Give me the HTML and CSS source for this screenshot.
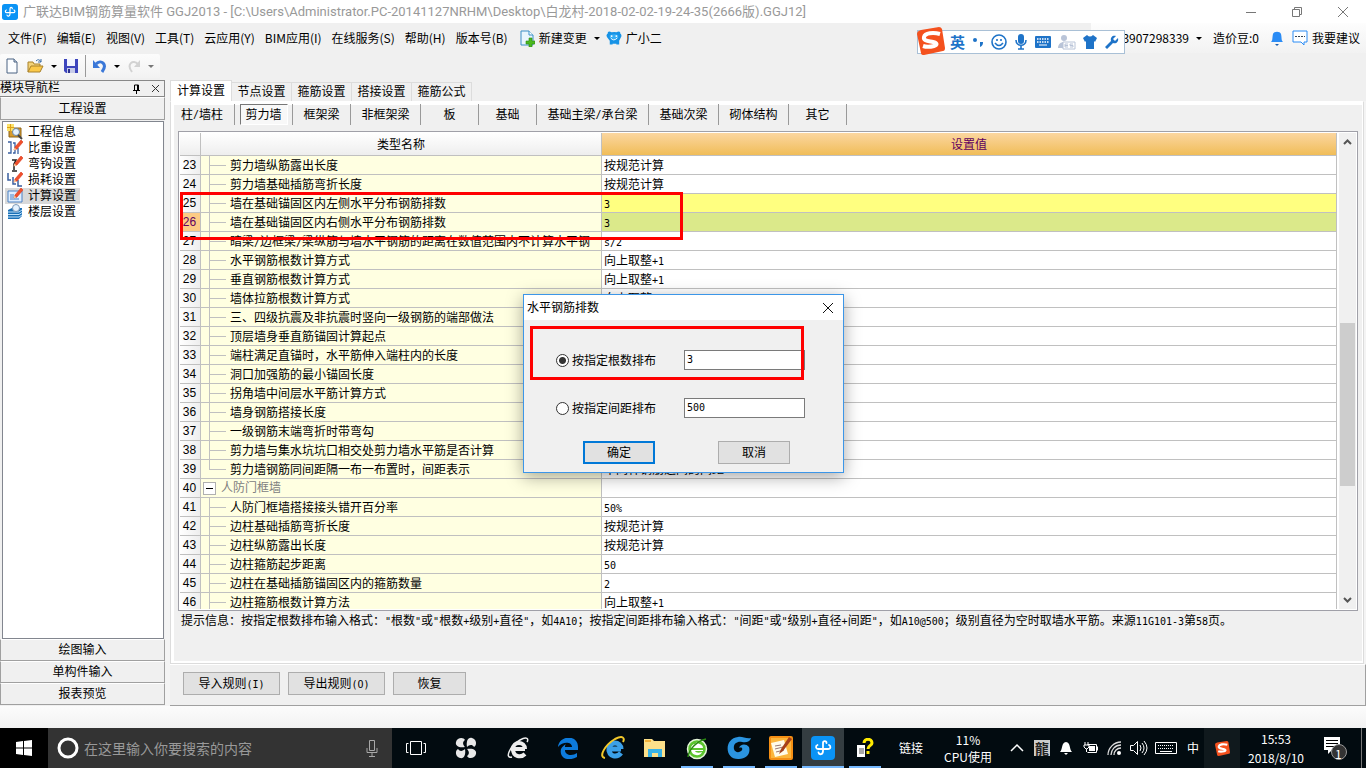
FILE: index.html
```html
<!DOCTYPE html>
<html lang="zh-CN">
<head>
<meta charset="utf-8">
<title>广联达BIM钢筋算量软件 GGJ2013</title>
<link rel="stylesheet" href="styles.css">
</head>
<body>
<svg class="defs" width="0" height="0" aria-hidden="true">
  <defs>
    <symbol id="glodon" viewBox="0 0 24 24"><rect width="24" height="24" rx="4" fill="#0a93f5"/><path d="M12 7v8c0 4-4 4-4.500 1.500M12 7c0-2.500 3.500-2.500 3.500 0M6.500 9C4 10 5 13 7 13h10c3 0 3-3 1-4" fill="none" stroke="#fff" stroke-width="1.800" stroke-linecap="round"/></symbol>
    <symbol id="sogou" viewBox="0 0 28 28"><path d="M4 3 22 0q2 0 3 2l3 19q0 3-2 3L7 28q-3 0-3-2L0 7q0-3 4-4z" fill="#f4511e"/><path d="M23 7C16 5 8 6 7 10s5 4 9 5 5 3 1 4-8 1-11 0" fill="none" stroke="#fff" stroke-width="4"/></symbol>
    <symbol id="pencil" viewBox="0 0 16 16"><path d="M8 7 14 0l2 2-6 7-3 1z" fill="#f0502c" stroke="#d8361a" stroke-width=".6"/><path d="m6.500 10.500 1-3 2 2z" fill="#f6c99a"/></symbol>
  </defs>
</svg>

<header class="titlebar">
  <svg class="app-icon" viewBox="0 0 24 24"><use href="#glodon"/></svg>
  <h1>广联达BIM钢筋算量软件 GGJ2013 - [C:\Users\Administrator.PC-20141127NRHM\Desktop\白龙村-2018-02-02-19-24-35(2666版).GGJ12]</h1>
  <div class="window-buttons">
    <button aria-label="最小化"><svg width="12" height="12" viewBox="0 0 12 12"><path d="M1 6.500h10"/></svg></button>
    <button aria-label="还原"><svg width="12" height="12" viewBox="0 0 12 12"><path d="M1.500 3.500h7v7h-7zM3.500 3.500v-2h7v7h-2"/></svg></button>
    <button aria-label="关闭"><svg width="12" height="12" viewBox="0 0 12 12"><path d="m1 1 10 10M11 1 1 11"/></svg></button>
  </div>
</header>

<nav class="menubar">
  <button>文件(F)</button><button>编辑(E)</button><button>视图(V)</button><button>工具(T)</button><button>云应用(Y)</button><button>BIM应用(I)</button><button>在线服务(S)</button><button>帮助(H)</button><button>版本号(B)</button>
  <button class="with-icon change"><svg width="15" height="17" viewBox="0 0 15 17"><path d="M1 1h8l4 4v10H1z" fill="#e8f5fd" stroke="#3a8fc7"/><path d="M9 1v4h4" fill="#fff" stroke="#3a8fc7"/><path d="M9 8h3v3h3v3h-3v3H9v-3H6v-3h3z" fill="#4cb81e" stroke="#2c8a10" stroke-width=".6"/></svg>新建变更<i class="caret"></i></button>
  <button class="with-icon bear"><svg width="16" height="16" viewBox="0 0 17 16"><path d="M2 2q1-2 4 0 3-1 5 0 3-2 4 0 0 2 1 2 1 2 0 3l-2 4v4h-3v-1H7v1H4v-4L1 7Q0 5 1 4q1 0 1-2z" fill="#1793e6"/><path d="M4 5q5-2 9 0v3q-4 3-9 0z" fill="#37aef5"/><circle cx="6" cy="6" r="1" fill="#fff"/><circle cx="11" cy="6" r="1" fill="#fff"/><path d="M5 8q3 4 7 0" fill="none" stroke="#fff"/></svg>广小二</button>
  <div class="account">
    <button>3907298339<i class="caret"></i></button>
    <span>造价豆:0</span>
    <svg width="14" height="16" viewBox="0 0 14 16"><path d="M1 12c2-2 1-4 2-8 1-3 7-3 8 0 1 4 0 6 2 8z" fill="#2b8cf5"/><path d="M5 14h4l-2 2z" fill="#1a5fb0"/></svg>
    <button class="suggest"><svg width="16" height="16" viewBox="0 0 16 16"><path d="M1 1h14v11h-3v3l-3-3H1z" fill="#fff" stroke="#2b8cf5"/><path d="M3 6.500h10" stroke="#345" stroke-dasharray="2 1"/></svg>我要建议</button>
  </div>
  <div class="ime">
    <svg class="ime-logo" width="28" height="28" viewBox="0 0 28 28"><use href="#sogou"/></svg>
    <b>英</b>
    <svg width="12" height="16" viewBox="0 0 12 16"><circle cx="3" cy="6" r="2" fill="#1e73c8"/><path d="M8 8h3c0 3-1 4-3 5" fill="#1e73c8"/></svg>
    <svg width="16" height="16" viewBox="0 0 16 16"><g fill="none" stroke="#1e73c8" stroke-width="1.600"><circle cx="8" cy="8" r="7"/><path d="M4 9q4 5 8 0M6 5v2M10 5v2"/></g></svg>
    <svg width="14" height="16" viewBox="0 0 14 16"><rect x="4" width="6" height="10" rx="3" fill="#1e73c8"/><path d="M2 6c0 7 10 7 10 0M7 11v4M4 15h6" fill="none" stroke="#1e73c8" stroke-width="1.600"/></svg>
    <svg width="16" height="12" viewBox="0 0 16 12"><rect width="16" height="12" rx="1" fill="#1e73c8"/><path d="M2 3h12M2 6h12" stroke="#fff" stroke-width="1.500" stroke-dasharray="1.500 1"/><path d="M4 9h8" stroke="#fff"/></svg>
    <svg width="18" height="16" viewBox="0 0 18 16"><circle cx="6" cy="4" r="3" fill="#b9c4d8"/><path d="M0 14c0-8 12-8 12 0z" fill="#b9c4d8"/><path d="M5 8h12v7H5z" fill="#fff" stroke="#b9c4d8"/><path d="M10 10H7v3h3M7 11.500h3M15 10h-3v1.500h3V13h-3" fill="none" stroke="#b9c4d8"/></svg>
    <svg width="14" height="14" viewBox="0 0 14 14"><path d="M0 3 4 0q3 3 6 0l4 3-2 4-1-1v8H3V6L2 7z" fill="#1e73c8"/></svg>
    <svg width="15" height="15" viewBox="0 0 15 15"><path d="m1 12 6-6c-1-4 2-6 5-5L9 4l2 2 3-3c1 4-2 6-5 5l-6 6z" fill="#1e73c8"/></svg>
  </div>
</nav>

<div class="toolbar">
  <div class="tools">
    <button aria-label="新建"><svg width="16" height="16" viewBox="0 0 16 16"><path d="M3 1h7l3 3v11H3z" fill="#fbfdff" stroke="#4b6382"/><path d="M10 1v3h3" fill="#c8d6e6" stroke="#4b6382"/></svg></button>
    <button aria-label="打开" class="wide"><svg width="17" height="16" viewBox="0 0 17 16"><path d="M1 14V4h5l1 2h6v3" fill="#f3d37a" stroke="#a8812a"/><path d="m1 14 3-6h12l-3 6z" fill="#fbc94a" stroke="#a8812a"/><path d="M9 3q3-3 5 1M14 1v3h-3" fill="none" stroke="#3d6fa6"/></svg><i class="caret"></i></button>
    <button aria-label="保存"><svg width="14" height="14" viewBox="0 0 14 14"><path d="M0 0h14v14H2l-2-2z" fill="#3d45bd"/><path d="M3 0h8v7H3z" fill="#f2f4ff"/><path d="M3 9h8v5H3z" fill="#c7cbe8"/><path d="M4 10h2v4H4z" fill="#2c3290"/></svg></button>
    <span class="tool-sep"></span>
    <button aria-label="撤销" class="wide"><svg width="14" height="14" viewBox="0 0 14 14"><path d="M3 5c5-5 12 0 6 8" fill="none" stroke="#3b78d8" stroke-width="3"/><path d="M0 1v8h7z" fill="#3b78d8"/></svg><i class="caret"></i></button>
    <button aria-label="恢复" class="wide"><svg width="14" height="14" viewBox="0 0 14 14"><path d="M11 5C6 0-1 5 5 13" fill="none" stroke="#d2d2d2" stroke-width="2"/><path d="M13 1v7H7z" fill="#d2d2d2"/></svg><i class="caret dim"></i></button>
  </div>
</div>

<div class="workspace">
  <aside class="sidebar">
    <div class="side-title"><span>模块导航栏</span>
      <svg width="9" height="10" viewBox="0 0 9 10"><path d="M2.500 6V1h4v5M5.500 1v5M1 6.500h7M4.500 6v4" fill="none" stroke="#000"/></svg>
      <svg width="9" height="9" viewBox="0 0 9 9"><path d="m1 1 7 7M8 1 1 8" stroke="#333"/></svg>
    </div>
    <button class="side-button">工程设置</button>
    <ul class="side-list">
      <li><svg width="16" height="16" viewBox="0 0 16 16"><path d="M2 4h12v9H2z" fill="#d79b2d" stroke="#8d651b"/><path d="M0 0h7v7H0z" fill="#fbe26a"/><path d="M0 3.500h7M3.500 0v7" stroke="#e0a018"/><circle cx="9" cy="8" r="3.500" fill="#e6f3ff" stroke="#6a86a8"/><path d="m11 11 4 4" stroke="#444" stroke-width="2"/></svg><span>工程信息</span></li>
      <li><svg width="16" height="16" viewBox="0 0 16 16"><path d="M1 2h3v11H1M6 3h2v10H6M11 8v6" fill="none" stroke="#3a5fa0" stroke-width="1.300"/><use href="#pencil"/></svg><span>比重设置</span></li>
      <li><svg width="16" height="16" viewBox="0 0 16 16"><path d="M5 4h4L7 8v6M5 15h5" fill="none" stroke="#222" stroke-width="1.500"/><use href="#pencil"/></svg><span>弯钩设置</span></li>
      <li><svg width="16" height="16" viewBox="0 0 16 16"><path d="M1 1v7h3M6 5v7h3M11 8v6h4" fill="none" stroke="#3a5fa0" stroke-width="1.500"/><use href="#pencil"/></svg><span>损耗设置</span></li>
      <li class="selected"><svg width="16" height="16" viewBox="0 0 16 16"><path d="M1 3h14v11H1z" fill="#dfeeff" stroke="#4d82c4"/><path d="M3 7h4M3 9h7M3 11h9" stroke="#4d82c4"/><use href="#pencil"/></svg><span>计算设置</span></li>
      <li><svg width="16" height="16" viewBox="0 0 16 16"><path d="m1 6 4-2h10v8l-3 3H1z" fill="#1a6fb5"/><path d="M1 8h11l3-2M1 10.500h11l3-2M1 13h11l3-2" fill="none" stroke="#bfe2fb"/><circle cx="9" cy="4" r="3.500" fill="#e4f2ff" stroke="#7d98b8"/></svg><span>楼层设置</span></li>
    </ul>
    <button class="side-button">绘图输入</button>
    <button class="side-button">单构件输入</button>
    <button class="side-button">报表预览</button>
  </aside>

  <main class="content">
    <div class="tabs" role="tablist">
      <button role="tab" aria-selected="true" class="active">计算设置</button><button role="tab">节点设置</button><button role="tab">箍筋设置</button><button role="tab">搭接设置</button><button role="tab">箍筋公式</button>
    </div>
    <section class="page">
      <div class="kinds">
        <button class="w3">柱<span class="n">/</span>墙柱</button><button class="w3 pressed"><span>剪力墙</span></button><button class="w3">框架梁</button><button class="w4">非框架梁</button><button class="w3">板</button><button class="w3">基础</button><button class="w7">基础主梁<span class="n">/</span>承台梁</button><button class="w4">基础次梁</button><button class="w4">砌体结构</button><button class="w3">其它</button>
      </div>
      <div class="grid">
        <div class="grid-view">
          <table>
            <colgroup><col class="c-no"><col class="c-name"><col></colgroup>
            <thead><tr><th></th><th>类型名称</th><th class="current">设置值</th></tr></thead>
            <tbody>
              <tr><th>23</th><td class="leaf">剪力墙纵筋露出长度</td><td>按规范计算</td></tr>
              <tr><th>24</th><td class="leaf">剪力墙基础插筋弯折长度</td><td>按规范计算</td></tr>
              <tr class="changed"><th>25</th><td class="leaf">墙在基础锚固区内左侧水平分布钢筋排数</td><td><span class="n">3</span></td></tr>
              <tr class="editing"><th>26</th><td class="leaf">墙在基础锚固区内右侧水平分布钢筋排数</td><td><span class="n">3</span></td></tr>
              <tr><th>27</th><td class="leaf">暗梁<span class="n">/</span>边框梁<span class="n">/</span>梁纵筋与墙水平钢筋的距离在数值范围内不计算水平钢</td><td><span class="n">s/2</span></td></tr>
              <tr><th>28</th><td class="leaf">水平钢筋根数计算方式</td><td>向上取整<span class="n">+1</span></td></tr>
              <tr><th>29</th><td class="leaf">垂直钢筋根数计算方式</td><td>向上取整<span class="n">+1</span></td></tr>
              <tr><th>30</th><td class="leaf">墙体拉筋根数计算方式</td><td>向上取整</td></tr>
              <tr><th>31</th><td class="leaf">三、四级抗震及非抗震时竖向一级钢筋的端部做法</td><td></td></tr>
              <tr><th>32</th><td class="leaf">顶层墙身垂直筋锚固计算起点</td><td></td></tr>
              <tr><th>33</th><td class="leaf">端柱满足直锚时，水平筋伸入端柱内的长度</td><td></td></tr>
              <tr><th>34</th><td class="leaf">洞口加强筋的最小锚固长度</td><td></td></tr>
              <tr><th>35</th><td class="leaf">拐角墙中间层水平筋计算方式</td><td></td></tr>
              <tr><th>36</th><td class="leaf">墙身钢筋搭接长度</td><td></td></tr>
              <tr><th>37</th><td class="leaf">一级钢筋末端弯折时带弯勾</td><td></td></tr>
              <tr><th>38</th><td class="leaf">剪力墙与集水坑坑口相交处剪力墙水平筋是否计算</td><td></td></tr>
              <tr><th>39</th><td class="leaf last">剪力墙钢筋同间距隔一布一布置时，间距表示</td><td>不同种钢筋之间的间距</td></tr>
              <tr><th>40</th><td class="group"><button aria-label="折叠"></button>人防门框墙</td><td></td></tr>
              <tr><th>41</th><td class="leaf">人防门框墙搭接接头错开百分率</td><td><span class="n">50%</span></td></tr>
              <tr><th>42</th><td class="leaf">边柱基础插筋弯折长度</td><td>按规范计算</td></tr>
              <tr><th>43</th><td class="leaf">边柱纵筋露出长度</td><td>按规范计算</td></tr>
              <tr><th>44</th><td class="leaf">边柱箍筋起步距离</td><td><span class="n">50</span></td></tr>
              <tr><th>45</th><td class="leaf">边柱在基础插筋锚固区内的箍筋数量</td><td><span class="n">2</span></td></tr>
              <tr><th>46</th><td class="leaf">边柱箍筋根数计算方法</td><td>向上取整<span class="n">+1</span></td></tr>
            </tbody>
          </table>
        </div>
        <div class="scrollbar">
          <svg width="9" height="6" viewBox="0 0 9 6"><path d="m1 5 3.500-3.500L8 5"/></svg>
          <i class="track-top"></i><i class="thumb"></i><i class="track-bottom"></i>
          <svg width="9" height="6" viewBox="0 0 9 6"><path d="m1 1 3.500 3.500L8 1"/></svg>
        </div>
        <div class="mark mark-rows"></div>
      </div>
      <p class="hint">提示信息：按指定根数排布输入格式：<span class="n">"</span>根数<span class="n">"</span>或<span class="n">"</span>根数<span class="n">+</span>级别<span class="n">+</span>直径<span class="n">"</span>，如<span class="n">4A10</span>；按指定间距排布输入格式：<span class="n">"</span>间距<span class="n">"</span>或<span class="n">"</span>级别<span class="n">+</span>直径<span class="n">+</span>间距<span class="n">"</span>，如<span class="n">A10@500</span>；级别直径为空时取墙水平筋。来源<span class="n">11G101-3</span>第<span class="n">58</span>页。</p>
    </section>
    <footer class="actions">
      <button>导入规则<span class="n">(I)</span></button><button>导出规则<span class="n">(O)</span></button><button class="short">恢复</button>
    </footer>
  </main>
</div>
<div class="status"></div>

<form class="dialog" role="dialog" aria-label="水平钢筋排数">
  <div class="dialog-title"><span>水平钢筋排数</span><button type="button" aria-label="关闭"><svg width="12" height="12" viewBox="0 0 12 12"><path d="m1 1 10 10M11 1 1 11" stroke="#111"/></svg></button></div>
  <div class="dialog-body">
    <div class="option"><label><input type="radio" name="mode" checked><span>按指定根数排布</span></label><input type="text" aria-label="根数" value="3"></div>
    <div class="option"><label><input type="radio" name="mode"><span>按指定间距排布</span></label><input type="text" aria-label="间距" value="500"></div>
    <div class="dialog-buttons"><button type="button" class="default">确定</button><button type="button">取消</button></div>
  </div>
  <div class="mark mark-option"></div>
</form>

<footer class="taskbar">
  <button class="start" aria-label="开始"><svg width="16" height="16" viewBox="0 0 16 16"><path d="m0 2 7-1v6.500H0zM8 1l8-1v7.500H8zM0 8.500h7V15l-7-1zM8 8.500h8V16l-8-1z" fill="#fff"/></svg></button>
  <label class="search">
    <svg width="22" height="22" viewBox="0 0 22 22"><circle cx="11" cy="11" r="9" fill="none" stroke="#fff" stroke-width="3"/></svg>
    <input type="text" placeholder="在这里输入你要搜索的内容">
    <svg width="12" height="17" viewBox="0 0 12 17"><path d="M3.500.5h5v10h-5zM1 8v4.500h10V8M6 13v3M3 16.500h6" fill="none" stroke="#a8a8a8"/></svg>
  </label>
  <button class="t-view" aria-label="任务视图"><svg width="20" height="14" viewBox="0 0 20 14"><path d="M4.500.5h11v13h-11zM2.500 2.500h-2v9h2M17.500 2.500h2v9h-2" fill="none" stroke="#fff"/></svg></button>
  <button class="t-wide" aria-label="助手"><svg width="22" height="22" viewBox="0 0 22 22"><g fill="#e8e8e8"><path d="M10 10C4 11 0 9 1 5c1-5 8-5 9-2-3 2-2 5 0 7z"/><path d="M12 10C11 4 13 0 17 1c5 1 5 8 2 9-2-3-5-2-7 0z"/><path d="M12 12c6-1 10 1 9 5-1 5-8 5-9 2 3-2 2-5 0-7z"/><path d="M10 12c1 6-1 10-5 9-5-1-5-8-2-9 2 3 5 2 7 0z"/></g></svg></button>
  <button class="t-wide" aria-label="浏览器"><svg width="22" height="22" viewBox="0 0 22 22"><path d="M18 12H6c0-8 12-8 12 0M6 12c0 8 8 9 12 5" fill="none" stroke="#eee" stroke-width="4"/><path d="M5 20C-3 22 3 9 13 3c7-4 9-1 7 2" fill="none" stroke="#eee" stroke-width="1.500"/></svg></button>
  <button class="t-mid" aria-label="Edge"><svg width="20" height="21" viewBox="0 0 20 21"><path d="M0 9C1-3 20-4 20 9v3H7c0 6 8 6 12 3v4C10 24 1 20 3 11c1-2 3-4 5-5-1 1-1 2-1 3h7c0-5-9-6-14 0z" fill="#0d7bdc"/></svg></button>
  <button aria-label="Internet Explorer"><svg width="24" height="24" viewBox="0 0 24 24"><path d="M20 13H8c0-8 12-8 12 0M8 13c0 8 8 9 12 4" fill="none" stroke="#3ba0e8" stroke-width="5"/><path d="M4 22C-3 21 4 9 14 3c8-4 10-1 8 3" fill="none" stroke="#f3c92b" stroke-width="2"/></svg></button>
  <button aria-label="文件资源管理器"><svg width="22" height="18" viewBox="0 0 22 18"><path d="M0 0h8l2 2h11v16H0z" fill="#fce08a"/><path d="M1 1h6v2H1z" fill="#f1b13a"/><path d="M4 18v-8h14v8h-4v-4H8v4z" fill="#39b3e6"/></svg></button>
  <button class="open" aria-label="360浏览器"><svg width="22" height="23" viewBox="0 0 22 23"><circle cx="11" cy="12" r="9.500" fill="#5cc52e" stroke="#e6f7da" stroke-width="1.500"/><path d="M5 11h12c0-3-3-4-4-4l-2-2-2 2c-2 0-4 2-4 4zM5 13h12v1H9c1 2 4 2 7 1-2 5-10 4-11-2z" fill="#fff"/><path d="M2 20C3 12 11 4 20 2" fill="none" stroke="#2a8a10" stroke-width="1.500"/></svg></button>
  <button class="open" aria-label="G助手"><svg width="24" height="24" viewBox="0 0 24 24"><path d="M24 2c-1 4-5 5-9 4-5-1-9 2-8 7 1 4 6 4 8 1 1-2-1-3-3-2 1-4 7-5 10-1 2 7-3 12-10 12C-3 24-3 2 11 1c4-1 8 2 13 1z" fill="#2b94e0"/></svg></button>
  <button class="open" aria-label="记事"><svg width="24" height="24" viewBox="0 0 24 24"><rect width="24" height="24" rx="2" fill="#f58f14"/><rect x="2" y="2" width="20" height="20" fill="#fbb63c"/><path d="m2 7 13-3 4 14-13 3z" fill="#fffbe8"/><path d="m6 10 6-1M6 13l8-2M7 16l8-2" stroke="#977"/><path d="m20 1-8 12-2 5 4-3L23 3z" fill="#a5401a"/></svg></button>
  <button class="open front" aria-label="广联达"><svg width="24" height="24" viewBox="0 0 24 24"><use href="#glodon"/></svg></button>
  <button class="open" aria-label="帮助"><svg width="18" height="20" viewBox="0 0 18 20"><path d="M1 7h8v12H1z" fill="#fff"/><path d="M3 11h5M3 13h5M3 15h5" stroke="#555"/><path d="M8 5c0-5 8-5 8 0 0 3-4 2-4 6M12 13v3" fill="none" stroke="#ffea00" stroke-width="3"/></svg></button>
  <div class="tray">
    <span class="links">链接</span>
    <span class="cpu">11%<br>CPU使用</span>
    <svg class="ti-first" viewBox="-8 -8 16 16"><path d="m-4 3 6-6 6 6" fill="none" stroke="#fff" stroke-width="1.500"/></svg>
    <span class="seal"><b>龍</b></span>
    <svg class="ti" viewBox="-12 -12 24 24"><path d="M-6 4c3-3 1-9 6-10 5 1 3 7 6 10zM-2 5h4l-2 2z" fill="#fff"/></svg>
    <svg class="ti" viewBox="-12 -12 24 24"><path d="M-2.500-3.500h9v8h-9M7.500-1.500v4M-5-6v3M-2-6v3M-6-3h5v2l-2 2h-1l-2-2zM-3.500 1v3" fill="none" stroke="#fff"/><path d="M-1-2h6v5h-6z" fill="#fff"/></svg>
    <svg class="ti" viewBox="-12 -12 24 24"><path d="M-6 7C-6 0 0-6 7-6M-3 7c0-5 4-10 10-10M0 7c0-4 3-7 7-7" fill="none" stroke="#ddd" stroke-width="1.300"/><circle cx="5" cy="5" r="2" fill="#fff"/></svg>
    <svg class="ti" viewBox="-12 -12 24 24"><path d="M-7.500-2.500h3l4-4v13l-4-4h-3zM2-3q2 3 0 6M4-5q4 5 0 10M6-7q6 7 0 14" fill="none" stroke="#fff"/></svg>
    <svg class="ti-key" viewBox="-16 -12 32 24"><path d="M-10.500-5.500h21v11h-21zM-6 3.500H6" fill="none" stroke="#fff"/><path d="M-8-2.500H8M-8 .5H8" stroke="#fff" stroke-dasharray="1 1"/></svg>
    <span class="lang">中</span>
    <span class="tray-ime"><svg width="15" height="15" viewBox="0 0 28 28"><use href="#sogou"/></svg></span>
    <span class="clock">15:53<br>2018/8/10</span>
    <button class="notify" aria-label="通知"><svg width="24" height="24" viewBox="0 0 24 24"><path d="M1 1h16v13H9l-4 4v-4H1z" fill="#fff"/><path d="M3 4.500h12M3 7.500h12M3 10.500h9" stroke="#000"/><circle cx="16" cy="16" r="7.500" fill="#333" stroke="#999"/></svg><span>1</span></button>
  </div>
</footer>
</body>
</html>
```
FILE: styles.css
```css
* { box-sizing: border-box; }
body {
  margin: 0;
  height: 100vh;
  display: flex;
  flex-direction: column;
  overflow: hidden;
  position: relative;
  background: #f0f0f0;
  color: #000;
  font: 12px/16px "Liberation Sans", "Noto Sans CJK SC", sans-serif;
}
button, input { font: inherit; color: inherit; }
button { margin: 0; padding: 0; border: 0; background: none; white-space: nowrap; }
svg { flex: none; display: block; }
.defs { position: absolute; }
.n { font: 10px/12px "DejaVu Sans Mono", monospace; }
.caret {
  width: 0;
  height: 0;
  border: 3px solid transparent;
  border-top-color: #000;
  border-bottom: 0;
}
.caret.dim { border-top-color: #777; }

/* title bar */
.titlebar { flex: none; height: 23px; display: flex; align-items: center; background: #fff; padding-left: 2px; }
.app-icon { width: 16px; height: 16px; margin-right: 5px; }
.titlebar h1 {
  margin: 0;
  flex: 1;
  font: 13px/18px Roboto, "Noto Sans CJK SC", sans-serif;
  color: #999;
  white-space: nowrap;
  overflow: hidden;
}
.window-buttons { display: flex; height: 20px; }
.window-buttons button { width: 46px; display: flex; justify-content: center; align-items: center; }
.window-buttons path { fill: none; stroke: #777; }

/* menu bar */
.menubar {
  flex: none;
  height: 30px;
  display: flex;
  align-items: center;
  gap: 10px;
  padding-left: 8px;
  position: relative;
  font-family: "Noto Sans CJK SC", sans-serif;
}
.with-icon { display: flex; align-items: center; gap: 4px; }
.with-icon .caret { margin-left: 3px; }
.change { margin-left: 2px; }
.bear { margin-left: -4px; }
.account {
  margin-left: auto;
  align-self: stretch;
  display: flex;
  align-items: center;
  gap: 11px;
  padding: 0 6px 0 31px;
  background: linear-gradient(#fdfdfd, #f2f2f2);
}
.account button { display: flex; align-items: center; gap: 7px; }
.account .suggest { gap: 4px; margin-left: -3px; }
.ime {
  position: absolute;
  top: 7px;
  right: 241px;
  height: 24px;
  display: flex;
  align-items: center;
  gap: 7px;
  padding: 0 5px 0 32px;
  border: 1px solid #a9c0d6;
  background: #fff;
}
.ime-logo { position: absolute; left: -1px; top: -4px; }
.ime b { font-size: 15px; color: #1e73c8; }

/* tool bar */
.toolbar { flex: none; height: 27px; padding-top: 1px; }
.tools {
  width: 160px;
  height: 24px;
  display: flex;
  align-items: center;
  gap: 7px;
  padding-left: 4px;
  border-radius: 2px;
  background: linear-gradient(#fcfcfc, #f2f2f2);
}
.tools .wide { display: flex; align-items: center; gap: 7px; }
.tool-sep { width: 1px; height: 22px; background: #999; }

/* workspace */
.workspace { flex: 1; min-height: 0; display: flex; gap: 5px; background: #f4f4f4; }
.sidebar { flex: none; width: 165px; display: flex; flex-direction: column; background: #f0f0f0; padding-bottom: 1px; }
.side-title {
  height: 17px;
  display: flex;
  align-items: center;
  gap: 10px;
  padding-right: 4px;
  border: 1px solid #888;
  border-left: 0;
}
.side-title span { flex: 1; line-height: 15px; }
.side-button {
  flex: none;
  height: 22px;
  border: 1px solid #a0a0a0;
  border-top-color: #fff;
  background: #f0f0f0;
}
.side-title + .side-button { height: 23px; }
.side-list {
  flex: 1;
  margin: 1px 1px 0 2px;
  padding: 2px 0 0 2px;
  list-style: none;
  border: 1px solid #82868f;
  background: #fff;
}
.side-list li { width: 75px; height: 16px; display: flex; align-items: center; gap: 5px; padding-left: 2px; line-height: 16px; }
.side-list .selected { background: #d9d9d9; }

.content { flex: 1; min-width: 0; display: flex; flex-direction: column; }
.tabs { flex: none; height: 21px; display: flex; align-items: flex-end; background: #f0f0f0; }
.tabs button { width: 60px; height: 19px; border: 1px solid #dcdcdc; border-left: 0; border-bottom: 0; background: #f0f0f0; }
.tabs .active { width: 62px; height: 21px; background: #fff; border-left: 1px solid #dcdcdc; }
.page {
  flex: 1;
  min-height: 0;
  display: flex;
  flex-direction: column;
  margin-right: 2px;
  padding: 0 5px 0 7px;
  border: 1px solid #dcdcdc;
  border-top-color: #fff;
  background: #f0f0f0;
  box-shadow: inset 3px 3px #fff, inset -1px -2px #fff;
}
.kinds { flex: none; display: flex; height: 27px; margin-left: -4px; padding: 2px 0 4px; }
.kinds button { height: 21px; border-right: 1px solid #999; display: flex; justify-content: center; align-items: center; }
.kinds .w3 { width: 58px; }
.kinds .w3:first-child { width: 61px; padding-right: 4px; }
.kinds .w4 { width: 70px; }
.kinds .w7 { width: 112px; }
.kinds .pressed span {
  width: 48px;
  height: 21px;
  border: 1px solid #777;
  border-right-color: #fff;
  border-bottom-color: #fff;
  background: #f8f8f8;
  line-height: 21px;
}
.grid {
  flex: 1;
  min-height: 0;
  display: flex;
  gap: 2px;
  padding: 1px;
  position: relative;
  border: 1px solid #a0a0a8;
  background: #fff;
  margin-top: 2px;
}
.grid-view { flex: 1; min-width: 0; overflow: hidden; }
table { width: 100%; border-collapse: separate; border-spacing: 0; table-layout: fixed; }
.c-no { width: 21px; }
.c-name { width: 401px; }
th, td {
  height: 19px;
  padding: 2px 2px 0;
  border: 0 solid #c0c0c0;
  border-width: 0 1px 1px 0;
  font-weight: normal;
  text-align: left;
  line-height: 16px;
  white-space: nowrap;
  overflow: hidden;
}
thead th { height: 23px; text-align: center; background: linear-gradient(#fff, #eee); }
thead .current { background: linear-gradient(#fbd6a0, #f0bd58); color: #600060; }
tbody th { padding: 0 1px 0 0; text-align: center; background: linear-gradient(90deg, #fff, #eee); }
.leaf, .group { background-color: #ffffe1; }
.leaf {
  padding-left: 29px;
  background-image: linear-gradient(#c0c0c0, #c0c0c0), linear-gradient(#c0c0c0, #c0c0c0);
  background-repeat: no-repeat;
  background-position: 8px 0, 8px 9px;
  background-size: 1px 100%, 17px 1px;
}
.leaf.last { background-size: 1px 9px, 17px 1px; }
.group { padding-top: 0; line-height: 18px; color: #808080; }
.group button {
  width: 13px;
  height: 13px;
  margin-right: 5px;
  vertical-align: middle;
  border: 1px solid #b0b0b0;
  background: linear-gradient(#000, #000) center / 7px 1px no-repeat #fff;
}
.changed td:last-child { background: #ffff80; }
.editing td:last-child { background: #dbe98a; }
.editing th { background: #fccb85; color: #600060; }
.scrollbar { flex: none; width: 17px; display: flex; flex-direction: column; align-items: center; background: #f0f0f0; padding: 6px 0; }
.scrollbar path { fill: none; stroke: #555; stroke-width: 2; }
.scrollbar i { width: 15px; }
.track-top { flex: 178; }
.thumb { flex: 163; background: #cdcdcd; }
.track-bottom { flex: 111; }
.hint { flex: none; height: 52px; margin: 0; padding: 2px 3px; white-space: nowrap; overflow: hidden; }
.actions {
  flex: none;
  height: 42px;
  display: flex;
  gap: 8px;
  padding: 7px 13px;
  border: 1px solid #a0a0a0;
  border-top-color: #fff;
  border-left: 0;
  background: #f0f0f0;
}
.actions button { width: 97px; height: 23px; border: 1px solid #adadad; background: #e1e1e1; }
.actions .short { width: 73px; }
.status { flex: none; height: 22px; background: linear-gradient(#fcfcfc, #f2f2f2); }

/* annotation frames */
.mark { position: absolute; border: 3px solid #f00; pointer-events: none; }
.mark-rows { left: 1px; top: 60px; width: 503px; height: 48px; }
.mark-option { left: 6px; top: 31px; width: 274px; height: 54px; }

/* dialog */
.dialog {
  position: absolute;
  left: 523px;
  top: 294px;
  width: 321px;
  border: 1px solid #3c96e8;
  background: #f0f0f0;
  box-shadow: 0 4px 16px rgba(0, 0, 0, .35);
}
.dialog-title { height: 25px; display: flex; align-items: center; justify-content: space-between; padding: 0 9px 0 3px; background: #fff; }
.dialog-body { padding: 30px 38px 8px 32px; }
.option { display: flex; justify-content: space-between; align-items: center; height: 20px; margin-bottom: 28px; }
.option label { display: flex; align-items: center; gap: 3px; }
.option label span { padding-top: 2px; }
.option input[type="radio"] {
  appearance: none;
  width: 13px;
  height: 13px;
  margin: 0;
  border: 1px solid #333;
  border-radius: 50%;
  background: #fff;
}
.option input[type="radio"]:checked { background: radial-gradient(#333 0 3px, #fff 4px); }
.option input[type="text"] {
  width: 121px;
  height: 20px;
  padding: 0 2px 2px;
  border: 1px solid #7a7a7a;
  border-radius: 0;
  background: #fff;
  font: 10px/14px "DejaVu Sans Mono", monospace;
}
.dialog-buttons { display: flex; justify-content: space-between; margin: -5px 15px 0 27px; }
.dialog-buttons button { width: 72px; height: 23px; border: 1px solid #adadad; background: #e1e1e1; }
.dialog-buttons .default { border: 2px solid #0078d7; }

/* task bar */
.taskbar {
  flex: none;
  height: 40px;
  display: flex;
  background: #020b10;
  color: #fff;
  font-family: "Noto Sans CJK SC", sans-serif;
}
.taskbar > button { width: 42px; display: flex; align-items: center; justify-content: center; }
.taskbar .start { width: 48px; background: #000; }
.search { width: 344px; display: flex; align-items: center; gap: 5px; padding: 0 14px 0 9px; background: #333; }
.search input { flex: 1; min-width: 0; border: 0; padding: 0; background: none; font-size: 14px; }
.search input::placeholder { color: #999; opacity: 1; }
.taskbar .t-view, .taskbar .t-mid { width: 48px; }
.taskbar .t-wide { width: 52px; }
.taskbar .open { background: linear-gradient(#76b9ff, #76b9ff) center bottom / 32px 2px no-repeat; }
.taskbar .front { background-color: #343d41; background-size: 100% 2px; }
.tray { margin-left: auto; display: flex; align-items: center; padding-right: 4px; border-right: 1px solid #777; margin-right: 4px; text-align: center; }
.links { width: 50px; }
.cpu { width: 64px; line-height: 17px; }
.ti-first { width: 30px; height: 16px; }
.ti { width: 24px; height: 24px; }
.ti-key { width: 32px; height: 24px; }
.seal { width: 24px; display: flex; justify-content: center; }
.seal b { width: 16px; height: 16px; background: #ccc; color: #222; font-size: 14px; line-height: 16px; }
.lang { width: 22px; }
.tray-ime { width: 36px; height: 40px; display: flex; align-items: center; justify-content: center; background: #10191d; }
.clock { width: 72px; line-height: 19px; }
.notify { width: 45px; height: 40px; display: grid; place-items: center; position: relative; }
.notify span { position: absolute; left: 23px; top: 18px; font-size: 12px; line-height: 16px; }
```
